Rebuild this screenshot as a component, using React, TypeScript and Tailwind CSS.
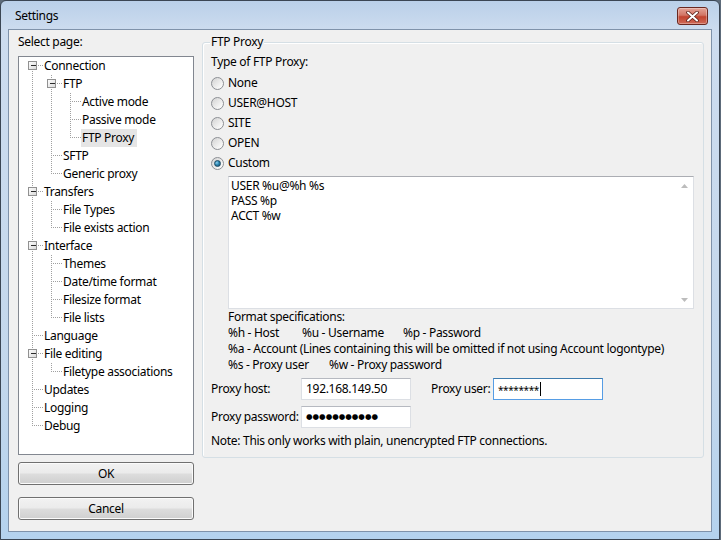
import React from 'react';

type TreeNode = { label: string; children?: TreeNode[]; selected?: boolean };

const tree: TreeNode[] = [
    {
        label: 'Connection',
        children: [
            {
                label: 'FTP',
                children: [
                    { label: 'Active mode' },
                    { label: 'Passive mode' },
                    { label: 'FTP Proxy', selected: true },
                ],
            },
            { label: 'SFTP' },
            { label: 'Generic proxy' },
        ],
    },
    { label: 'Transfers', children: [{ label: 'File Types' }, { label: 'File exists action' }] },
    {
        label: 'Interface',
        children: [
            { label: 'Themes' },
            { label: 'Date/time format' },
            { label: 'Filesize format' },
            { label: 'File lists' },
        ],
    },
    { label: 'Language' },
    { label: 'File editing', children: [{ label: 'Filetype associations' }] },
    { label: 'Updates' },
    { label: 'Logging' },
    { label: 'Debug' },
];

type Row = {
    label: string;
    selected?: boolean;
    guides: boolean[];
    last: boolean;
    first: boolean;
    expandable: boolean;
};

function flatten(nodes: TreeNode[], guides: boolean[] = [], rows: Row[] = []): Row[] {
    nodes.forEach((n, i) => {
        const last = i === nodes.length - 1;
        rows.push({
            label: n.label,
            selected: n.selected,
            guides,
            last,
            first: guides.length === 0 && i === 0,
            expandable: !!n.children,
        });
        if (n.children) flatten(n.children, [...guides, !last], rows);
    });
    return rows;
}

const rows = flatten(tree);

function Connector({ row }: { row: Row }) {
    const depth = row.guides.length;
    const w = (depth + 1) * 19;
    const cx = depth * 19 + 8.5;
    return (
        <svg width={w} height={18} className="shrink-0" shapeRendering="crispEdges">
            {row.guides.map((g, i) =>
                g ? (
                    <line key={i} x1={i * 19 + 8.5} y1={0} x2={i * 19 + 8.5} y2={18} stroke="#a0a0a0" strokeDasharray="1 1" />
                ) : null
            )}
            <line x1={cx} y1={row.first ? 8 : 0} x2={cx} y2={row.last ? 9 : 18} stroke="#a0a0a0" strokeDasharray="1 1" />
            <line x1={cx + 1} y1={8.5} x2={w} y2={8.5} stroke="#a0a0a0" strokeDasharray="1 1" />
            {row.expandable && (
                <g>
                    <defs>
                        <linearGradient id="exp" x1="0" y1="0" x2="1" y2="1">
                            <stop offset="0" stopColor="#ffffff" />
                            <stop offset="1" stopColor="#d8d8d8" />
                        </linearGradient>
                    </defs>
                    <rect x={cx - 4} y={4.5} width={8} height={8} fill="url(#exp)" stroke="#919191" />
                    <line x1={cx - 2} y1={8.5} x2={cx + 3} y2={8.5} stroke="#2b2b2b" />
                </g>
            )}
        </svg>
    );
}

function Radio({ checked }: { checked?: boolean }) {
    return (
        <div className="flex h-[13px] w-[13px] shrink-0 items-center justify-center rounded-full border border-[#8c8f94] bg-[linear-gradient(135deg,#d2d2d2,#f4f4f4_70%,#ffffff)]">
            {checked && (
                <div className="h-[7px] w-[7px] rounded-full border border-[#1d4a63] bg-[radial-gradient(circle_at_35%_35%,#8fd0ef,#2d88b4_45%,#154d6b)]" />
            )}
        </div>
    );
}

function Button({ children }: { children: React.ReactNode }) {
    return (
        <div className="flex h-[23px] items-center justify-center rounded-[3px] border border-[#707070] bg-[linear-gradient(#f2f2f2,#ebebeb_48%,#dddddd_52%,#cfcfcf)] shadow-[inset_0_0_0_1px_#fbfbfb]">
            {children}
        </div>
    );
}

function TextBox({ children, focused }: { children?: React.ReactNode; focused?: boolean }) {
    return (
        <div
            className={
                focused
                    ? 'flex h-[22px] w-[110px] shrink-0 items-center border border-[#569de5] border-t-[#3d7bad] bg-white pl-[4px]'
                    : 'flex h-[22px] w-[110px] shrink-0 items-center border border-[#dcdfe4] border-t-[#b6b9c0] bg-white pl-[4px]'
            }
        >
            {children}
        </div>
    );
}

function ScrollArrow({ up }: { up?: boolean }) {
    return (
        <div className="flex h-[17px] w-[17px] items-center justify-center">
            <svg width="7" height="4" viewBox="0 0 7 4">
                <path d={up ? 'M0 4 L3.5 0 L7 4 Z' : 'M0 0 L3.5 4 L7 0 Z'} fill="#bcbcbc" />
            </svg>
        </div>
    );
}

export default function App() {
    return (
        <div className="h-[540px] w-[721px] overflow-hidden bg-[#5d6b7a] font-['Noto_Sans',sans-serif] text-[12px] leading-[16px] tracking-[-0.3px] text-black">
            <div className="flex h-full w-[720px] flex-col rounded-t-[6px] border border-[#3b4654] bg-[linear-gradient(180deg,#bad0e9,#cddcef_30px,#c3d7ec_70%,#b4d2ee)] px-[7px] pb-[7px]">
                {/* Title bar */}
                <div className="flex h-[28px] shrink-0 items-start justify-between pl-[7px] pr-[4px]">
                    <span className="mt-[7px]">Settings</span>
                    <div className="mt-[6px] flex h-[18px] w-[31px] items-center justify-center rounded-[3px] border border-[#6a2720] bg-[linear-gradient(#e3a397,#d27565_45%,#c2432f_55%,#cf6a58)] shadow-[inset_0_0_0_1px_rgba(255,255,255,0.3)]">
                        <svg width="13" height="11" viewBox="0 0 13 11">
                            <path d="M2 1.5 L11 9.5 M11 1.5 L2 9.5" stroke="#5a1f18" strokeWidth="3.6" strokeLinecap="round" />
                            <path d="M2 1.5 L11 9.5 M11 1.5 L2 9.5" stroke="#ffffff" strokeWidth="2" strokeLinecap="round" />
                        </svg>
                    </div>
                </div>

                {/* Client area */}
                <div className="flex flex-1 border border-[#7f92aa] bg-[#f0f0f0]">
                    {/* Left column */}
                    <div className="ml-[9px] flex w-[176px] flex-col pt-[4px]">
                        <span>Select page:</span>
                        <div className="mt-[6px] h-[399px] shrink-0 border border-[#828790] bg-white pl-[5px]">
                            {rows.map((r, i) => (
                                <div key={i} className="flex h-[18px] items-center">
                                    <Connector row={r} />
                                    <span
                                        className={
                                            r.selected
                                                ? 'flex h-[18px] items-center whitespace-nowrap bg-[#e5e5e5] pl-[1px] pr-[3px]'
                                                : 'flex h-[18px] items-center whitespace-nowrap pl-[1px] pr-[3px]'
                                        }
                                    >
                                        {r.label}
                                    </span>
                                </div>
                            ))}
                        </div>
                        <div className="mt-[7px]">
                            <Button>OK</Button>
                        </div>
                        <div className="mt-[12px]">
                            <Button>Cancel</Button>
                        </div>
                    </div>

                    {/* FTP Proxy group */}
                    <div className="ml-[8px] mt-[12px] flex h-[416px] w-[502px] flex-col rounded-[3px] border border-[#d5dfe5] pl-[8px] shadow-[inset_1px_1px_0_#ffffff]">
                        <span className="-mt-[9px] -ml-[1px] w-fit bg-[#f0f0f0] px-[1px]">FTP Proxy</span>
                        <span className="mt-[4px]">Type of FTP Proxy:</span>
                        <div className="mt-[3px] flex shrink-0 flex-col">
                            {['None', 'USER@HOST', 'SITE', 'OPEN', 'Custom'].map((t) => (
                                <div key={t} className="flex h-[20px] items-center gap-[4px]">
                                    <Radio checked={t === 'Custom'} />
                                    <span>{t}</span>
                                </div>
                            ))}
                        </div>

                        <div className="ml-[17px] mt-[3px] flex h-[133px] w-[466px] shrink-0 border border-[#dcdfe4] border-t-[#abadb3] bg-white">
                            <div className="flex-1 whitespace-pre pl-[2px] pt-[1px] leading-[15px]">
                                {'USER %u@%h %s\nPASS %p\nACCT %w'}
                            </div>
                            <div className="flex w-[17px] flex-col justify-between">
                                <ScrollArrow up />
                                <ScrollArrow />
                            </div>
                        </div>

                        <div className="ml-[17px] flex shrink-0 flex-col whitespace-nowrap">
                            <span>Format specifications:</span>
                            <div className="flex">
                                <span className="w-[74px]">%h - Host</span>
                                <span className="w-[101px]">%u - Username</span>
                                <span>%p - Password</span>
                            </div>
                            <span>%a - Account (Lines containing this will be omitted if not using Account logontype)</span>
                            <div className="flex">
                                <span className="w-[101px]">%s - Proxy user</span>
                                <span>%w - Proxy password</span>
                            </div>
                        </div>

                        <div className="mt-[5px] flex shrink-0 items-center whitespace-nowrap">
                            <span className="w-[90px] shrink-0">Proxy host:</span>
                            <TextBox>192.168.149.50</TextBox>
                            <span className="ml-[20px] w-[62px] shrink-0">Proxy user:</span>
                            <TextBox focused>
                                <span className="mt-[1px] text-[10px] tracking-[-0.4px]">********</span>
                                <span className="ml-[1px] h-[14px] w-[1px] bg-black" />
                            </TextBox>
                        </div>
                        <div className="mt-[6px] flex shrink-0 items-center whitespace-nowrap">
                            <span className="w-[90px] shrink-0">Proxy password:</span>
                            <TextBox>
                                <span className="font-['DejaVu_Sans'] text-[7.5px] tracking-[0px]">●●●●●●●●●●●</span>
                            </TextBox>
                        </div>
                        <span className="mt-[5px] whitespace-nowrap">Note: This only works with plain, unencrypted FTP connections.</span>
                    </div>
                </div>
            </div>
        </div>
    );
}
